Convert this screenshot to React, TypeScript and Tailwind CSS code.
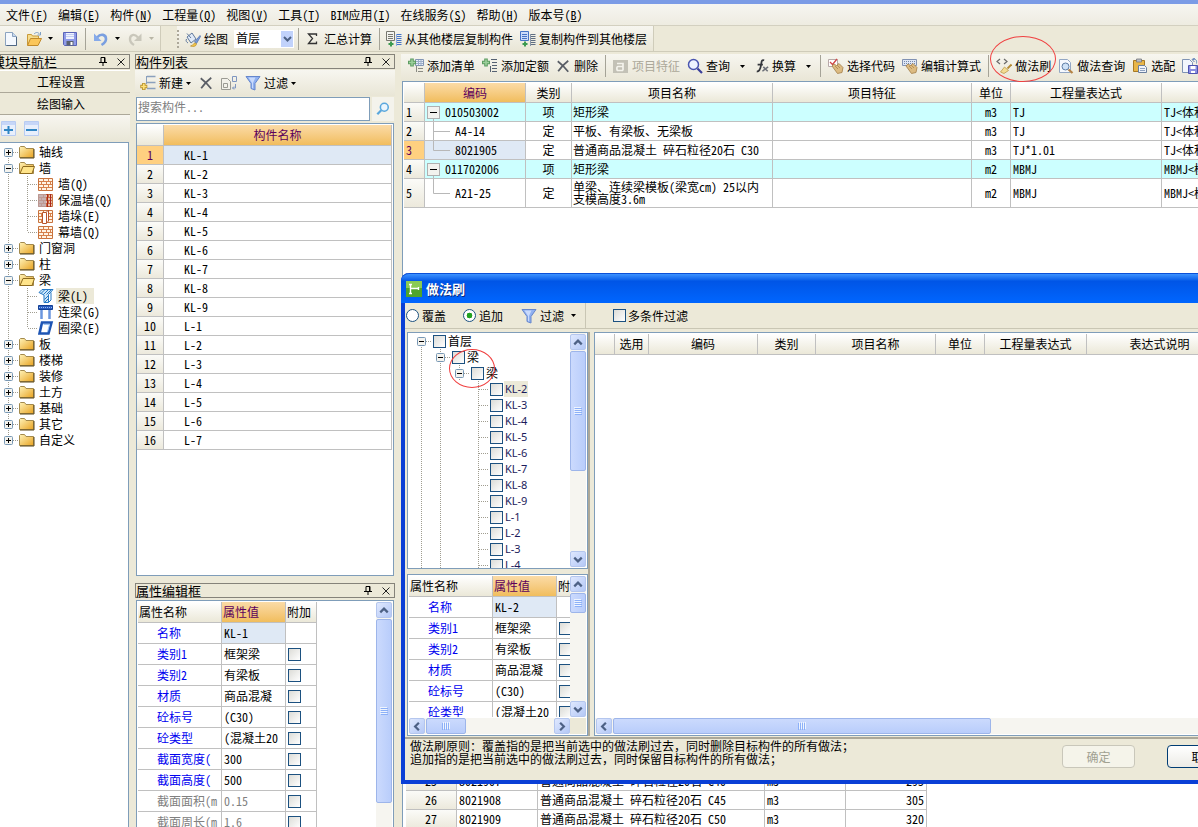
import React from 'react';

type Kids = { children?: React.ReactNode };

/* ---------- small controls ---------- */

const Caret = ({ dim }: { dim?: boolean }) => (
  <svg width="5" height="3" viewBox="0 0 5 3" className="shrink-0" aria-hidden>
    <path d="M0 0h5L2.5 3z" fill={dim ? '#b8b5a6' : '#000'} />
  </svg>
);

const Check = ({ label, id }: { label?: string; id?: string }) => (
  <input
    id={id}
    type="checkbox"
    aria-label={label}
    className="block h-[13px] w-[13px] shrink-0 appearance-none border border-[#1c5180] bg-linear-to-br from-[#dcdcd7] to-white"
  />
);

const Sep = () => <span className="h-[22px] w-px shrink-0 bg-[#a5a397]" />;

const Tool = ({ icon, children, caret, disabled, gap = 'gap-[3px]' }: Kids & { icon: React.ReactNode; caret?: boolean; disabled?: boolean; gap?: string }) => (
  <button type="button" disabled={disabled} className={`flex shrink-0 items-center ${gap} whitespace-nowrap ${disabled ? 'text-[#aca899]' : ''}`}>
    {icon}
    <span>{children}</span>
    {caret && <Caret />}
  </button>
);

const arrows = {
  up: 'M3.5 9.5 7.5 5.5 11.5 9.5',
  down: 'M3.5 5.5 7.5 9.5 11.5 5.5',
  left: 'M9.5 3.5 5.5 7.5 9.5 11.5',
  right: 'M5.5 3.5 9.5 7.5 5.5 11.5',
};

const ScrollButton = ({ dir, label }: { dir: keyof typeof arrows; label: string }) => (
  <button type="button" aria-label={label} className="flex h-4 w-4 shrink-0 items-center justify-center rounded-xs border border-[#b4c6ee] bg-linear-to-br from-[#dfe8fe] to-[#b4c8f6]">
    <svg width="15" height="15" viewBox="0 0 15 15" fill="none" stroke="#4d6185" strokeWidth="2.4" aria-hidden>
      <path d={arrows[dir]} />
    </svg>
  </button>
);

const Grip = ({ vertical }: { vertical?: boolean }) => (
  <svg width="8" height="8" viewBox="0 0 8 8" className={vertical ? '' : 'rotate-90'} aria-hidden>
    <path d="M0 .5h7M0 2.5h7M0 4.5h7M0 6.5h7" stroke="#eef4fe" />
    <path d="M1 1.5h7M1 3.5h7M1 5.5h7M1 7.5h7" stroke="#8cb0f8" />
  </svg>
);

const VThumb = ({ size }: { size: string }) => (
  <div className={`flex w-4 shrink-0 items-center justify-center rounded-xs border border-[#9db5ea] bg-linear-to-r from-[#cbdafd] to-[#b9cdfb] ${size}`}>
    <Grip vertical />
  </div>
);

const HThumb = ({ size }: { size: string }) => (
  <div className={`flex h-4 shrink-0 items-center justify-center rounded-xs border border-[#9db5ea] bg-linear-to-b from-[#cbdafd] to-[#b9cdfb] ${size}`}>
    <Grip />
  </div>
);

/* ---------- icons ---------- */

const Svg = ({ children, size = 16, vb = '0 0 16 16' }: Kids & { size?: number; vb?: string }) => (
  <svg width={size} height={size} viewBox={vb} className="shrink-0" fill="none" aria-hidden>
    {children}
  </svg>
);

const NewIcon = () => (
  <Svg>
    <path d="M2.5 1.5h7l4 4v9h-11z" fill="#f4f8fe" stroke="#8ba3c0" />
    <path d="M9.5 1.5v4h4" fill="#c9d8ec" stroke="#8ba3c0" />
    <path d="M13.5 6v8.5h-10" stroke="#4f6784" />
  </Svg>
);
const OpenIcon = () => (
  <Svg>
    <path d="M1.5 14V3.5h4l1 1.500h6v3" fill="#f6dc8c" stroke="#c99a3a" />
    <path d="M1.500 14.500 4.500 7.500h11l-3.500 7z" fill="#fbc65a" stroke="#c18a2b" />
    <path d="M8 3c2-2 4-2 5.500 0M14.500 1v3h-3" stroke="#7fa0c4" />
  </Svg>
);
const SaveIcon = () => (
  <Svg>
    <path d="M1.5 1.500h13v13h-12l-1-1z" fill="#8f9be8" stroke="#5a64b8" />
    <path d="M4 2h8v6H4z" fill="#eef2fd" />
    <path d="M4 3.500h8M4 5.500h8" stroke="#c3cdf3" />
    <path d="M4.500 10h7v4.500h-7z" fill="#5b6270" />
    <path d="M8.500 11h2v3h-2z" fill="#fff" />
  </Svg>
);
const UndoIcon = () => (
  <Svg>
    <path d="M4 6.500C8 2 13 3.500 13 8c0 3-2 4.500-4.500 6" stroke="#7a9fe0" strokeWidth="2.6" />
    <path d="M1 2.500v7.500h7.500z" fill="#86aaea" />
  </Svg>
);
const RedoIcon = () => (
  <Svg>
    <path d="M11 6.500C7 2 3 4 3 8c0 3 1.500 4.500 4 6" stroke="#c9c7bb" strokeWidth="2.400" />
    <path d="M14.500 2.500V10H7z" fill="#c9c7bb" />
  </Svg>
);
const PaintIcon = () => (
  <Svg>
    <path d="M2 6 7 2l4 6-5 4z" fill="#dfe9f7" stroke="#60799d" />
    <path d="M2 2.500 6 7M1.500 8c-1 2 0 3 1.500 4" stroke="#60799d" />
    <path d="M15 4.500 9.500 11l2 1.500 4-7z" fill="#7c9edb" stroke="#4869a9" strokeWidth=".7" />
    <path d="M5.500 15c2.500 0 3-3.500 5-3l1 1c-.5 2.500-3 3-6 2z" fill="#f1c64a" stroke="#b78b28" strokeWidth=".7" />
  </Svg>
);
const CopyFloorIcon = ({ to }: { to?: boolean }) => (
  <Svg>
    <path d="M.5.5h8v9h-8z" fill={to ? '#cddcf9' : '#f3f3ef'} stroke={to ? '#4674c6' : '#77776f'} />
    <path d="M2 3.500h5M2 5.500h5M2 7.500h5" stroke={to ? '#4674c6' : '#77776f'} />
    <path d="M11 3.500h4.500M11 5.500h4.500M11 7.500h4.500M11 9.500h4.500M11 11.500h4.500M11 13.500h4.500" stroke={to ? '#5f6e82' : '#4674c6'} />
    <path d="M10.500 3v12" stroke={to ? '#8a97a8' : '#8cabe4'} />
    <path d="M5 10.500v5M2.500 13h5" stroke="#3c9a50" strokeWidth="2" />
  </Svg>
);
const AddRowIcon = ({ fine }: { fine?: boolean }) => (
  <Svg>
    {!fine && <path d="M7.500 1.500h8v6h-8z" fill="#e9eff9" stroke="#8396b5" />}
    {!fine && <path d="M8 3.500h7M8 5.500h7M10.500 2v5M13 2v5" stroke="#9badc9" />}
    {fine && <path d="M9 1.500h6M10 4.500h5M10 7.500h5" stroke="#566273" />}
    <path d="M10 10.500h5M10 13.500h5M8.500 8v6" stroke={fine ? '#566273' : '#8a8a82'} />
    <path d="M4 .5v8M0 4.500h8" stroke="#5d9c62" strokeWidth="3.600" />
    <path d="M4 1.500v6M1 4.500h6" stroke="#9ccf9c" strokeWidth="1.600" />
  </Svg>
);
const CrossIcon = () => (
  <Svg size={14}>
    <path d="M2 2.500c4 3 8 7 12 12M14 2C10 5 6 9 2.500 14" stroke="#5a5e66" strokeWidth="2" />
  </Svg>
);
const FeatureIcon = () => (
  <Svg>
    <path d="M0 2h15v13H0z" fill="#c3c1b6" />
    <path d="M4 5.500h6v7M10 8.500H5c-1.500 0-1.500 4 0 4h5" stroke="#f4f3ec" strokeWidth="1.700" />
  </Svg>
);
const FindIcon = () => (
  <Svg>
    <circle cx="6.500" cy="6.500" r="5" fill="#eef3ff" stroke="#4a55b0" strokeWidth="1.500" />
    <path d="m10.500 10.500 4.500 4.500" stroke="#3a3f9a" strokeWidth="2.200" />
  </Svg>
);
const FxIcon = () => (
  <Svg size={14}>
    <path d="M10.500 1.500c-3-1-3 1.500-3.500 5s-1 8-5 8M3 6.500h6" stroke="#35373c" strokeWidth="2" />
    <path d="m9.500 9 5 5M15 9l-6.500 5" stroke="#6d7078" strokeWidth="1.800" />
  </Svg>
);
const HandIcon = ({ keys }: { keys?: boolean }) => (
  <Svg>
    {keys ? <path d="M.5 1.500h14v6H.5z" fill="#dfe7f5" stroke="#8192b3" /> : <path d="M.5 1.500h9v7h-9z" fill="#fff" stroke="#b7a9a9" />}
    {keys ? <path d="M2 3.500h11M2 5.500h11" stroke="#7387ab" strokeDasharray="1 1" /> : <path d="m2 4 2.500 2.500L9 1" stroke="#d04545" strokeWidth="1.300" />}
    <path d="m4 8 2-2 2.500 1.500L11 5.500l4 4-1 5-4.500 1z" fill="#dcbb82" stroke="#a37e48" strokeWidth=".8" />
    <path d="m7 8 3 3M9 7l3 3" stroke="#a37e48" strokeWidth=".7" />
  </Svg>
);
const BrushIcon = () => (
  <Svg>
    <path d="M4 1 1 3.500 4 6M8 1l3 2.500L8 6" stroke="#6a6a6a" strokeWidth="1.200" />
    <path d="m15.500 6.500-4 4" stroke="#b38a35" strokeWidth="1.800" />
    <path d="m8.500 9 4 3.500-4.500 3-3.500-1.500z" fill="#f3dc92" stroke="#bd9a4c" strokeWidth=".8" />
  </Svg>
);
const PageFindIcon = () => (
  <Svg>
    <path d="M1.500 1.500h8l3 3v10h-11z" fill="#f6f9fe" stroke="#93a7c4" />
    <circle cx="7.500" cy="8.500" r="3.500" fill="#cfe2f7" stroke="#5f7ea6" />
    <path d="m10.500 11.500 4 3.500" stroke="#b58243" strokeWidth="2.200" />
  </Svg>
);
const PasteIcon = () => (
  <Svg>
    <path d="M1.500 2.500h11v11h-11z" fill="#e8b648" stroke="#a87a24" />
    <path d="M4.500 1h5v3h-5z" fill="#b9bcc4" stroke="#73767e" strokeWidth=".8" />
    <path d="M6.500 7.500h6l2 2v5h-8z" fill="#f0f4fb" stroke="#6a7f9e" />
    <path d="M8 10.500h5M8 12.500h5" stroke="#8fa2bf" />
  </Svg>
);
const DocSaveIcon = () => (
  <Svg>
    <path d="M.5 1.500h7l3 3v10H.5z" fill="#f2f6fd" stroke="#7f93b4" />
    <path d="M6.500 7.500h9v8h-9z" fill="#8b8fe0" stroke="#4e52b0" />
    <path d="M8.500 8h5v3h-5zM9 13h4v2H9z" fill="#fff" />
    <path d="M11 1.500c3-1 4 1 3.500 4M13 0l-3 1.500L12.500 4" stroke="#5f80b8" />
  </Svg>
);
const AddItemIcon = () => (
  <Svg>
    <path d="M7 1.500h8.500M7 7.500h8.500M7 13.500h8.500" stroke="#8aa0bd" strokeWidth="1.600" />
    <path d="M6.500 1v8" stroke="#8aa0bd" />
    <path d="M3.800 8v7M.3 11.500h7" stroke="#b7912b" strokeWidth="3.400" />
    <path d="M3.800 8.800v5.400M1.100 11.500h5.400" stroke="#ffe27a" strokeWidth="1.600" />
  </Svg>
);
const PageCopyIcon = () => (
  <Svg>
    <path d="M.5 3.500h6l3 3v8h-9z" fill="#f2f1ea" stroke="#9a9a93" />
    <path d="M2.500 8.500h4v4h-4z" stroke="#9a9a93" />
    <path d="M11.500 1.500h4v5h-4z" stroke="#7f96c0" />
    <path d="M14.500 9v4h-3m0 0 1.500-1.500m-1.500 1.500 1.500 1.500" stroke="#7f96c0" />
  </Svg>
);
const FunnelIcon = () => (
  <Svg>
    <path d="M1 1.500h14L10 8.500V15l-4-1.500v-5z" fill="#8fb0f0" stroke="#6586cc" />
    <path d="M3.500 2.500h7L8 8v5.500l-1-.5V8z" fill="#c9dafc" />
  </Svg>
);
const SearchIcon = () => (
  <Svg size={14}>
    <circle cx="9.500" cy="6" r="4.500" fill="#eaf5fd" stroke="#5aa7dd" strokeWidth="1.800" />
    <path d="M6 9.500 1.500 14" stroke="#5aa7dd" strokeWidth="2.600" />
  </Svg>
);
const FolderIcon = ({ open }: { open?: boolean }) => (
  <Svg>
    <defs>
      <linearGradient id="folderFill" x1="0" y1="0" x2="1" y2="1">
        <stop offset="0" stopColor="#fff3b8" />
        <stop offset="1" stopColor="#e8a322" />
      </linearGradient>
    </defs>
    <path d="M.5 13.500v-10l1-1h4l1.500 2h7.500v9z" fill="url(#folderFill)" stroke="#a38a4d" />
    {open ? <path d="M1 13.500 4 6.500h11.500L13 13.500z" fill="#ffe48a" stroke="#8d6a1e" /> : <path d="M15 5v9H1" stroke="#5b4616" />}
  </Svg>
);
const BrickIcon = ({ kind }: { kind: string }) => (
  <Svg>
    <path d="M.5 2.500h14v12H.5z" fill="#fff3e2" stroke="#c8733e" />
    <path d="M1 5.500h13M1 8.500h13M1 11.500h13M5.500 3v2.500M10.500 3v2.500M3.500 6v2.500M8.500 6v2.500M12.500 6v2.500M5.500 9v2.500M10.500 9v2.500M3.500 12v2.500M8.500 12v2.500" stroke="#d6804a" />
    {kind === 'insulated' && <path d="M0 2h8v13H0z" fill="#b9a1a6" opacity=".8" />}
    {kind === 'insulated' && <path d="M9.500 2v13M12.500 2v13" stroke="#a8281c" strokeWidth="1.500" />}
    {kind === 'pier' && <path d="M4.500 4.500h4v11h-4zM8.500 4l2-2v11l-2 2" fill="#fff" stroke="#b8552a" />}
  </Svg>
);
const BeamIcon = () => (
  <Svg>
    <path d="M1 4.500 4 1.500h11l-3 3.500-1.500 1.500v8H6V7z" fill="#cde8fa" stroke="#2678c4" />
    <path d="m3 5.500 3.500-3.500M5.500 6.500 10 2M8.500 6.500 13 2M6.500 11.500l3.500-3.500M6.500 14.500l3.500-3.500" stroke="#2678c4" />
    <path d="M10.500 14.500 13 12V4.500" stroke="#2678c4" />
  </Svg>
);
const LinkBeamIcon = () => (
  <Svg>
    <path d="M.5 1.500h14v4H.5z" fill="#2a5cc0" stroke="#123f94" />
    <path d="M1 3.500h13" stroke="#9cc0f2" strokeDasharray="1 1" />
    <path d="M3.500 6v9M11.500 6v9" stroke="#6b96de" strokeWidth="2.500" />
  </Svg>
);
const RingBeamIcon = () => (
  <Svg>
    <path d="M4 2.500h9.500l-3 11H1.500z" fill="#fff" stroke="#1e55b4" strokeWidth="2.600" />
    <path d="M5.500 4.500h6l-2 7.500" stroke="#9cc4f4" />
  </Svg>
);
const PinIcon = () => (
  <svg width="8" height="9" viewBox="0 0 8 9" fill="none" aria-hidden>
    <path d="M2 .5h4v5H2zM5.500 1v4.500M0 5.500h8M4 6v3" stroke="#000" />
  </svg>
);
const CloseIcon = () => (
  <svg width="8" height="8" viewBox="0 0 8 8" fill="none" aria-hidden>
    <path d="m.5.5 7 7M7.500.5l-7 7" stroke="#222" />
  </svg>
);

/* ---------- tree ---------- */

type GuideKind = 'plus' | 'minus' | 'branch' | 'end' | 'line' | 'blank';

const Guide = ({ kind, first, last }: { kind: GuideKind; first?: boolean; last?: boolean }) => {
  const node = kind === 'plus' || kind === 'minus';
  const top = first ? 8 : 0;
  const bottom = last || kind === 'end' ? 8 : 16;
  return (
    <svg width="19" height="16" viewBox="0 0 19 16" className="shrink-0" fill="none" aria-hidden>
      {kind !== 'blank' && <path d={`M8.500 ${top}V${bottom}`} stroke="#a09d90" strokeDasharray="1 1" />}
      {kind !== 'blank' && kind !== 'line' && <path d="M9 8.500H19" stroke="#a09d90" strokeDasharray="1 1" />}
      {node && <rect x="4.500" y="4.500" width="8" height="8" rx="1" fill="#f4f3ee" stroke="#7898b5" />}
      {node && <path d={kind === 'plus' ? 'M6 8.500h5M8.500 6v5' : 'M6 8.500h5'} stroke="#000" />}
    </svg>
  );
};

type NavChild = { text: string; icon: React.ReactNode; selected?: boolean };
const nav: { text: string; children?: NavChild[] }[] = [
  { text: '轴线' },
  {
    text: '墙',
    children: [
      { text: '墙(Q)', icon: <BrickIcon kind="plain" /> },
      { text: '保温墙(Q)', icon: <BrickIcon kind="insulated" /> },
      { text: '墙垛(E)', icon: <BrickIcon kind="pier" /> },
      { text: '幕墙(Q)', icon: <BrickIcon kind="plain" /> },
    ],
  },
  { text: '门窗洞' },
  { text: '柱' },
  {
    text: '梁',
    children: [
      { text: '梁(L)', icon: <BeamIcon />, selected: true },
      { text: '连梁(G)', icon: <LinkBeamIcon /> },
      { text: '圈梁(E)', icon: <RingBeamIcon /> },
    ],
  },
  { text: '板' },
  { text: '楼梯' },
  { text: '装修' },
  { text: '土方' },
  { text: '基础' },
  { text: '其它' },
  { text: '自定义' },
];

const NavTree = () => (
  <ul className="pt-px">
    {nav.map((n, i) => (
      <li key={n.text}>
        <div className="flex h-4 items-center">
          <Guide kind={n.children ? 'minus' : 'plus'} first={i === 0} last={i === nav.length - 1} />
          <FolderIcon open={!!n.children} />
          <span className="ml-1">{n.text}</span>
        </div>
        {n.children && (
          <ul>
            {n.children.map((c, j) => (
              <li key={c.text} className="flex h-4 items-center">
                <Guide kind="line" />
                <Guide kind={j === n.children!.length - 1 ? 'end' : 'branch'} />
                {c.icon}
                <span className={`ml-0.5 pr-1.5 pl-0.5 ${c.selected ? 'bg-[#ece9d8]' : ''}`}>{c.text}</span>
              </li>
            ))}
          </ul>
        )}
      </li>
    ))}
  </ul>
);

const TargetRow = ({ guides, text, first, latin, selected }: { guides: GuideKind[]; text: string; first?: boolean; latin?: boolean; selected?: boolean }) => (
  <li className="flex h-4 items-center">
    {guides.map((g, i) => (
      <Guide key={i} kind={g} first={first} />
    ))}
    <label className="ml-px flex h-4 items-center">
      <Check />
      <span className={`ml-px px-px ${latin ? "font-['Noto_Sans','Noto_Sans_CJK_SC',sans-serif] text-[11px] text-[#1c1c5c]" : ''} ${selected ? 'bg-[#ece9d8]' : ''}`}>{text}</span>
    </label>
  </li>
);

const targets = ['KL-2', 'KL-3', 'KL-4', 'KL-5', 'KL-6', 'KL-7', 'KL-8', 'KL-9', 'L-1', 'L-2', 'L-3', 'L-4'];

/* ---------- tables ---------- */

const headGrad = 'bg-linear-to-b from-white to-[#ebe8d8]';
const headOn = 'bg-linear-to-b from-[#fbdba6] to-[#f1bd5c] text-[#5c005c]';
const sideGrad = 'bg-linear-to-b from-[#fbfbf8] to-[#ece9dc]';
const line = 'border-r border-b border-[#c0c0c0]';

const props = [
  ['名称', 'KL-1'],
  ['类别1', '框架梁'],
  ['类别2', '有梁板'],
  ['材质', '商品混凝'],
  ['砼标号', '(C30)'],
  ['砼类型', '(混凝土20'],
  ['截面宽度(', '300'],
  ['截面高度(', '500'],
  ['截面面积(m', '0.15'],
  ['截面周长(m', '1.6'],
];

const PropTable = ({ name, count }: { name: string; count: number }) => (
  <table className="w-[179px] table-fixed border-separate border-spacing-0">
    <colgroup>
      <col className="w-[84px]" />
      <col className="w-16" />
      <col className="w-[31px]" />
    </colgroup>
    <thead>
      <tr className="h-[21px] text-left">
        <th className={`px-px font-normal ${line} ${headGrad}`}>属性名称</th>
        <th className={`px-px font-normal ${line} ${headOn}`}>属性值</th>
        <th className={`px-px font-normal whitespace-nowrap ${line} ${headGrad}`}>附加</th>
      </tr>
    </thead>
    <tbody>
      {props.slice(0, count).map(([k, v], i) => (
        <tr key={k} className={`h-[21px] ${i > 7 ? 'text-[#808080]' : ''}`}>
          <td className={`overflow-hidden pl-[19px] whitespace-nowrap ${line} ${i > 7 ? '' : 'text-[#0000f0]'}`}>{k}</td>
          <td className={`overflow-hidden pl-0.5 whitespace-nowrap ${line} ${i === 0 ? 'bg-[#dfe9f5]' : ''}`}>{i === 0 ? name : v}</td>
          <td className={`pl-0.5 ${line}`}>{i > 0 && <Check label={`附加 ${k}`} />}</td>
        </tr>
      ))}
    </tbody>
  </table>
);

const components = ['KL-1', 'KL-2', 'KL-3', 'KL-4', 'KL-5', 'KL-6', 'KL-7', 'KL-8', 'KL-9', 'L-1', 'L-2', 'L-3', 'L-4', 'L-5', 'L-6', 'L-7'];

const ComponentTable = () => (
  <table className="w-full table-fixed border-separate border-spacing-0">
    <colgroup>
      <col className="w-[27px]" />
      <col />
    </colgroup>
    <thead>
      <tr className="h-[21px]">
        <th aria-label="序号" className={`${line} ${headGrad}`} />
        <th className={`font-normal ${line} ${headOn}`}>构件名称</th>
      </tr>
    </thead>
    <tbody>
      {components.map((c, i) => (
        <tr key={c} className="h-[19px]">
          <td className={`text-center ${line} ${i === 0 ? 'bg-[#ffd080] text-[#5c005c]' : sideGrad}`}>{i + 1}</td>
          <td className={`pl-5 ${line} ${i === 0 ? 'bg-[#dfe9f5]' : ''}`}>{c}</td>
        </tr>
      ))}
    </tbody>
  </table>
);

type Bill = { code: string; kind: string; name: string; unit: string; expr: string; note: string; parent?: boolean; lastChild?: boolean };
const bills: Bill[] = [
  { code: '010503002', kind: '项', name: '矩形梁', unit: 'm3', expr: 'TJ', note: 'TJ<体积>', parent: true },
  { code: 'A4-14', kind: '定', name: '平板、有梁板、无梁板', unit: 'm3', expr: 'TJ', note: 'TJ<体积>' },
  { code: '8021905', kind: '定', name: '普通商品混凝土 碎石粒径20石 C30', unit: 'm3', expr: 'TJ*1.01', note: 'TJ<体积>*1.01', lastChild: true },
  { code: '011702006', kind: '项', name: '矩形梁', unit: 'm2', expr: 'MBMJ', note: 'MBMJ<模板面积>', parent: true },
  { code: 'A21-25', kind: '定', name: '单梁、连续梁模板(梁宽cm) 25以内 支模高度3.6m', unit: 'm2', expr: 'MBMJ', note: 'MBMJ<模板面积>', lastChild: true },
];

const CodeCell = ({ row, tall }: { row: Bill; tall: boolean }) => {
  const h = tall ? 28 : 18;
  const mid = h / 2;
  return (
    <div className="flex items-center">
      <svg width={row.parent ? 20 : 30} height={h} viewBox={`0 0 ${row.parent ? 20 : 30} ${h}`} fill="none" className="shrink-0" aria-hidden>
        {row.parent ? (
          <>
            <path d="M8.500 14v4" stroke="#b8b8b8" />
            <rect x="2.500" y="3.500" width="12" height="12" fill="#f2f2ee" stroke="#b0b0b0" />
            <path d="M5 9.500h7" stroke="#000" />
          </>
        ) : (
          <path d={`M8.500 0V${row.lastChild ? mid + 0.5 : h}M8.500 ${mid + 0.5}H25`} stroke="#b8b8b8" />
        )}
      </svg>
      {row.code}
    </div>
  );
};

const BillTable = () => (
  <table className="w-full table-fixed border-separate border-spacing-0">
    <colgroup>
      <col className="w-[21px]" />
      <col className="w-[101px]" />
      <col className="w-[46px]" />
      <col className="w-[201px]" />
      <col className="w-[199px]" />
      <col className="w-[39px]" />
      <col className="w-[151px]" />
      <col />
    </colgroup>
    <thead>
      <tr className="h-5">
        {['', '编码', '类别', '项目名称', '项目特征', '单位', '工程量表达式', ''].map((h, i) => (
          <th key={i} className={`font-normal ${i === 7 ? 'border-b border-[#c0c0c0]' : line} ${i === 1 ? headOn : headGrad}`}>{h}</th>
        ))}
      </tr>
    </thead>
    <tbody>
      {bills.map((b, i) => (
        <tr key={b.code} className={`${i === 4 ? 'h-[29px]' : 'h-[19px]'} ${b.parent ? 'bg-[#ccffff]' : ''}`}>
          <td className={`pl-0.5 ${line} ${i === 2 ? 'bg-[#ffd080] text-[#5c005c]' : sideGrad}`}>{i + 1}</td>
          <td className={`${line} ${i === 2 ? 'bg-[#dfe9f5]' : ''}`}><CodeCell row={b} tall={i === 4} /></td>
          <td className={`text-center ${line}`}>{b.kind}</td>
          <td className={`px-px ${line} ${i === 4 ? 'leading-3' : ''}`}>{b.name}</td>
          <td className={line} />
          <td className={`text-center ${line}`}>{b.unit}</td>
          <td className={`pl-0.5 ${line}`}>{b.expr}</td>
          <td className="overflow-hidden border-b border-[#c0c0c0] pl-0.5 whitespace-nowrap">{b.note}</td>
        </tr>
      ))}
    </tbody>
  </table>
);

const quotas = [
  [25, '8021907', '普通商品混凝土 碎石粒径20石 C40', 'm3', 295],
  [26, '8021908', '普通商品混凝土 碎石粒径20石 C45', 'm3', 305],
  [27, '8021909', '普通商品混凝土 碎石粒径20石 C50', 'm3', 320],
];

const QuotaTable = () => (
  <table className="w-[521px] table-fixed border-separate border-spacing-0">
    <colgroup>
      <col className="w-[51px]" />
      <col className="w-[81px]" />
      <col className="w-[227px]" />
      <col className="w-[81px]" />
      <col className="w-[81px]" />
    </colgroup>
    <tbody>
      {quotas.map((r) => (
        <tr key={r[0]} className="h-[19px]">
          <td className={`text-center ${line} ${sideGrad}`}>{r[0]}</td>
          <td className={`pl-0.5 ${line}`}>{r[1]}</td>
          <td className={`pl-0.5 whitespace-nowrap ${line}`}>{r[2]}</td>
          <td className={`pl-0.5 ${line}`}>{r[3]}</td>
          <td className={`pr-0.5 text-right ${line}`}>{r[4]}</td>
        </tr>
      ))}
    </tbody>
  </table>
);

/* ---------- panels ---------- */

const PanelHeader = ({ title, clipped }: { title: string; clipped?: boolean }) => (
  <div className="flex h-[15px] shrink-0 items-center border border-[#85837a] bg-[#ece9d8] pr-1 text-[13px] leading-[13px]">
    <h2 className={`flex-1 whitespace-nowrap ${clipped ? '-indent-[9px]' : ''}`}>{title}</h2>
    <button type="button" aria-label="固定" className="mr-2.5"><PinIcon /></button>
    <button type="button" aria-label="关闭"><CloseIcon /></button>
  </div>
);

const barGrad = 'bg-linear-to-b from-[#f7f6f0] to-[#e9e6d6]';

const NavPanel = () => (
  <aside className="flex w-[130px] shrink-0 flex-col pt-0.5">
    <PanelHeader title="模块导航栏" clipped />
    <button type="button" className="mt-px h-[23px] border-t border-b border-t-white border-b-[#aca899] pr-2">工程设置</button>
    <button type="button" className="h-[22px] border-b border-[#aca899] pr-2">绘图输入</button>
    <div className={`flex h-[27px] shrink-0 items-center gap-2 pl-px ${barGrad}`}>
      <button type="button" aria-label="全部展开">
        <Svg size={15} vb="0 0 15 15"><path d="M.5.5h14v14H.5z" fill="#e8effc" stroke="#b8ccf2" /><path d="M1 1h13v3H1z" fill="#c6d6f8" /><path d="M3 9h9M7.500 5v8" stroke="#2f86c4" strokeWidth="2" /></Svg>
      </button>
      <button type="button" aria-label="全部折叠">
        <Svg size={15} vb="0 0 15 15"><path d="M.5.5h14v14H.5z" fill="#e8effc" stroke="#b8ccf2" /><path d="M1 1h13v3H1z" fill="#c6d6f8" /><path d="M2 9h11" stroke="#2f86c4" strokeWidth="2" /></Svg>
      </button>
    </div>
    <div className="mr-px flex-1 overflow-hidden border-t border-r border-[#7f9db9] bg-white">
      <NavTree />
    </div>
  </aside>
);

const ListPanel = () => (
  <section className="ml-[5px] flex w-[260px] shrink-0 flex-col pt-0.5">
    <PanelHeader title="构件列表" />
    <div className={`mt-px flex h-[26px] shrink-0 items-center gap-2 pl-[5px] ${barGrad}`}>
      <Tool icon={<AddItemIcon />} caret>新建</Tool>
      <button type="button" aria-label="删除"><CrossIcon /></button>
      <button type="button" aria-label="复制"><PageCopyIcon /></button>
      <Tool icon={<FunnelIcon />} caret>过滤</Tool>
    </div>
    <div className="mt-px flex h-6 shrink-0 gap-0.5 px-px">
      <input type="text" aria-label="搜索构件" placeholder="搜索构件..." className="min-w-0 flex-1 border border-[#7f9db9] bg-white px-px pb-1 placeholder:text-[#808080]" />
      <button type="button" aria-label="搜索" className="flex w-[22px] items-center justify-center bg-[#f4f3ec]"><SearchIcon /></button>
    </div>
    <div className="mx-px mt-0.5 min-h-0 flex-1 overflow-hidden border border-[#7f9db9] bg-white pt-px pr-px">
      <ComponentTable />
    </div>
    <div className="mt-[7px] flex h-[244px] shrink-0 flex-col">
      <PanelHeader title="属性编辑框" />
      <div className="mx-px mt-0.5 flex min-h-0 flex-1 overflow-hidden border border-b-0 border-[#7f9db9] bg-white pt-px pl-px">
        <div className="min-w-0 flex-1 overflow-hidden"><PropTable name="KL-1" count={10} /></div>
        <div className="mr-px flex w-4 flex-col gap-px bg-[#f6f5f0]">
          <ScrollButton dir="up" label="向上滚动" />
          <VThumb size="h-[184px]" />
        </div>
      </div>
    </div>
  </section>
);

const gridCols = ['', '选用', '编码', '类别', '项目名称', '单位', '工程量表达式', '表达式说明'];

const BrushDialog = () => (
  <section role="dialog" aria-label="做法刷" className="absolute top-[221px] -right-14 left-0 flex flex-col rounded-t-lg border-x-4 border-b-4 border-[#0a3fd6] bg-[#ece9d8]">
    <header className="-mx-1 flex h-[30px] items-center gap-1 rounded-t-lg border-t border-[#0a50d8] bg-linear-to-b from-[#3c92ff] via-[#0055e6] via-25% to-[#0066ff] pl-[5px]">
      <Svg>
        <path d="M0 0h16v16H0z" fill="#4fa52a" />
        <path d="M0 0h16v7H0z" fill="#8acb55" />
        <path d="M4.500 3v10M3 3.500h3M3 12.500h3M5 7.500h8M12.500 6v3" stroke="#fff" strokeWidth="1.400" />
      </Svg>
      <h2 className="text-[13px] font-bold text-white [text-shadow:1px_1px_#0a2a80]">做法刷</h2>
    </header>
    <div className="flex h-[26px] items-center border-b border-[#c9c6b4]">
      <div className="flex h-full w-[181px] items-center border-r border-[#c9c6b4] pl-px">
        {['覆盖', '追加'].map((t, i) => (
          <label key={t} className="mr-[17px] flex items-center gap-[3px]">
            <input type="radio" name="mode" defaultChecked={i === 1} className="h-[13px] w-[13px] appearance-none rounded-full border border-[#1c5180] bg-white checked:bg-radial checked:from-[#21a121] checked:from-35% checked:to-white checked:to-40%" />
            {t}
          </label>
        ))}
        <button type="button" className="flex items-center gap-[3px] pl-px">
          <FunnelIcon />
          过滤
          <span className="pl-1"><Caret /></span>
        </button>
      </div>
      <label className="ml-[27px] flex items-center gap-0.5">
        <Check />
        多条件过滤
      </label>
    </div>
    <div className="mt-[3px] flex h-[404px] pl-0.5">
      <div className="flex w-[181px] shrink-0 flex-col gap-[5px]">
        <div className="flex h-[237px] shrink-0 overflow-hidden border border-[#7f9db9] bg-white pr-px pb-px">
          <ul className="relative min-w-0 flex-1 pl-[5px]">
            <TargetRow guides={['minus']} first text="首层" />
            <TargetRow guides={['line', 'minus']} text="梁" />
            <TargetRow guides={['line', 'line', 'minus']} text="梁" />
            {targets.map((t, i) => (
              <TargetRow key={t} guides={['line', 'line', 'blank', 'branch']} text={t} latin selected={i === 0} />
            ))}
            <li aria-hidden className="pointer-events-none absolute top-4 left-[41px] h-[39px] w-[46px] rounded-[50%] border border-[#f04040]" />
          </ul>
          <div className="flex w-4 flex-col gap-px bg-[#f6f5f0] pt-px">
            <ScrollButton dir="up" label="向上滚动" />
            <VThumb size="h-[120px]" />
            <span className="flex-1" />
            <ScrollButton dir="down" label="向下滚动" />
          </div>
        </div>
        <div className="flex min-h-0 flex-1 flex-col border border-[#7f9db9] bg-white p-px">
          <div className="flex min-h-0 flex-1">
            <div className="min-w-0 flex-1 overflow-hidden"><PropTable name="KL-2" count={6} /></div>
            <div className="flex w-4 flex-col gap-px bg-[#f6f5f0]">
              <ScrollButton dir="up" label="向上滚动" />
              <VThumb size="h-5" />
              <span className="flex-1" />
              <ScrollButton dir="down" label="向下滚动" />
            </div>
          </div>
          <div className="mt-px flex shrink-0 bg-[#ece9d8]">
            <div className="flex flex-1 gap-px bg-[#f6f5f0]">
              <ScrollButton dir="left" label="向左滚动" />
              <HThumb size="w-10" />
              <span className="flex-1" />
              <ScrollButton dir="right" label="向右滚动" />
            </div>
            <span className="w-4" />
          </div>
        </div>
      </div>
      <div className="mr-[3px] w-[3px] border-l-2 border-[#aca899]" />
      <div className="flex min-w-0 flex-1 flex-col border border-[#7f9db9] bg-white">
        <table className="mt-px w-full table-fixed border-separate border-spacing-0">
          <colgroup>
            <col className="w-5" />
            <col className="w-[34px]" />
            <col className="w-[109px]" />
            <col className="w-[58px]" />
            <col className="w-[120px]" />
            <col className="w-[49px]" />
            <col className="w-[102px]" />
            <col />
          </colgroup>
          <thead>
            <tr className="h-[21px]">
              {gridCols.map((h, i) => (
                <th key={i} className={`font-normal ${line} ${headGrad} ${i === 7 ? 'pr-4' : ''}`}>{h}</th>
              ))}
            </tr>
          </thead>
        </table>
        <div className="flex-1" />
        <div className="mb-px flex gap-px bg-[#f6f5f0] pl-px">
          <ScrollButton dir="left" label="向左滚动" />
          <HThumb size="w-[378px]" />
        </div>
      </div>
    </div>
    <footer className="mt-px flex h-[43px] items-start gap-8 border-t-2 border-[#aca899] pr-[10px] pl-[5px]">
      <div className="flex-1 leading-[13px]">
        <p>做法刷原则：覆盖指的是把当前选中的做法刷过去，同时删除目标构件的所有做法；</p>
        <p>追加指的是把当前选中的做法刷过去，同时保留目标构件的所有做法；</p>
      </div>
      <button type="button" disabled className="mt-1.5 h-[23px] w-[73px] shrink-0 rounded-sm border border-[#c9c7ba] bg-[#f5f4ea] text-[#a1a192]">确定</button>
      <button type="button" className="mt-1.5 h-[23px] w-[73px] shrink-0 rounded-sm border border-[#003c74] bg-linear-to-b from-white to-[#ecebe6]">取消</button>
    </footer>
  </section>
);

const WorkArea = () => (
  <main className="relative ml-1.5 flex min-w-0 flex-1 flex-col pt-0.5">
    <div className={`relative flex h-[27px] shrink-0 items-center pb-[3px] pl-[7px] ${barGrad}`}>
      <div className="flex shrink-0 items-center gap-[7px]">
        <Tool icon={<AddRowIcon />}>添加清单</Tool>
        <Tool icon={<AddRowIcon fine />}>添加定额</Tool>
        <Tool icon={<CrossIcon />} gap="gap-1">删除</Tool>
        <Sep />
        <Tool icon={<FeatureIcon />} disabled>项目特征</Tool>
        <Tool icon={<FindIcon />}>查询</Tool>
        <span className="flex px-[3px]"><Caret /></span>
        <Tool icon={<FxIcon />}>换算</Tool>
        <span className="flex px-[3px]"><Caret /></span>
      </div>
      <div className="ml-1.5 flex shrink-0 items-center gap-[7px]">
        <Sep />
        <Tool icon={<HandIcon />}>选择代码</Tool>
        <Tool icon={<HandIcon keys />}>编辑计算式</Tool>
        <Sep />
        <div className="relative">
          <Tool icon={<BrushIcon />}>做法刷</Tool>
          <span aria-hidden className="pointer-events-none absolute -top-[22px] -left-1.5 h-[46px] w-[66px] rounded-[50%] border border-[#f04040]" />
        </div>
        <Tool icon={<PageFindIcon />}>做法查询</Tool>
        <Tool icon={<PasteIcon />}>选配</Tool>
        <Tool icon={<DocSaveIcon />}>存档</Tool>
      </div>
    </div>
    <div className="ml-px min-h-0 flex-1 overflow-hidden border-t border-l border-[#7f9db9] bg-white pt-px pl-px">
      <BillTable />
    </div>
    <div className="ml-px h-[55px] shrink-0 overflow-hidden border-l border-[#7f9db9] bg-white pl-[3px]">
      <QuotaTable />
    </div>
    <BrushDialog />
  </main>
);

/* ---------- application frame ---------- */

const menus = [
  ['文件', 'F'],
  ['编辑', 'E'],
  ['构件', 'N'],
  ['工程量', 'Q'],
  ['视图', 'V'],
  ['工具', 'T'],
  ['BIM应用', 'I'],
  ['在线服务', 'S'],
  ['帮助', 'H'],
  ['版本号', 'B'],
];

const MainToolbar = () => (
  <div className="flex h-[26px] shrink-0 items-center border-b border-[#cfccba]">
    <div className={`flex h-full shrink-0 items-center gap-[7px] border-r border-[#cfccba] pr-1.5 pl-[3px] ${barGrad}`}>
      <button type="button" aria-label="新建文件"><NewIcon /></button>
      <button type="button" aria-label="打开" className="flex items-center gap-1.5"><OpenIcon /><Caret /></button>
      <button type="button" aria-label="保存" className="ml-0.5"><SaveIcon /></button>
      <Sep />
      <button type="button" aria-label="撤销" className="flex items-center gap-1.5"><UndoIcon /><Caret /></button>
      <button type="button" aria-label="重做" disabled className="flex items-center gap-1.5"><RedoIcon /><Caret dim /></button>
    </div>
    <div className={`ml-4 flex h-full shrink-0 items-center border-r border-[#cfccba] pr-1.5 ${barGrad}`}>
      <span className="mr-1.5 h-[18px] border-l-2 border-dotted border-[#aca899]" />
      <Tool icon={<PaintIcon />}>绘图</Tool>
      <div className="relative ml-1.5">
        <select aria-label="楼层" className="block h-[18px] w-[60px] appearance-none bg-white pb-0.5 pl-0.5 leading-4">
          <option>首层</option>
        </select>
        <span className="pointer-events-none absolute top-px right-px flex h-4 w-3 items-center justify-center bg-[#c1d2fb]">
          <svg width="9" height="6" viewBox="0 0 9 6" fill="none" aria-hidden><path d="m1 1 3.500 3.500L8 1" stroke="#4d6185" strokeWidth="2" /></svg>
        </span>
      </div>
      <span className="w-1" />
      <Sep />
      <span className="w-2" />
      <Tool gap="gap-1.5" icon={<svg width="11" height="12" viewBox="0 0 11 12" fill="none" aria-hidden><path d="M9.500 3V1h-8l4 4.500-4 5h8v-2" stroke="#333" strokeWidth="1.300" /></svg>}>汇总计算</Tool>
      <span className="w-[7px]" />
      <Sep />
      <span className="w-1.5" />
      <Tool icon={<CopyFloorIcon />}>从其他楼层复制构件</Tool>
      <span className="w-[7px]" />
      <Tool icon={<CopyFloorIcon to />}>复制构件到其他楼层</Tool>
    </div>
  </div>
);

export default function App() {
  return (
    <div className="flex h-screen flex-col overflow-hidden bg-[#ece9d8] font-['Noto_Sans_Mono_CJK_SC','Noto_Sans_CJK_SC',sans-serif] text-[12px] leading-4 text-black">
      <div className="h-1 shrink-0 bg-[#7b9be6]" />
      <nav className="flex h-[22px] shrink-0 items-center gap-2.5 border-b border-[#d3d0c0] bg-linear-to-b from-[#f6f5f1] to-[#eeece1] pl-1.5">
        {menus.map(([t, k]) => (
          <button key={t} type="button" className="shrink-0 whitespace-nowrap">
            {t}(<u>{k}</u>)
          </button>
        ))}
      </nav>
      <MainToolbar />
      <div className="flex min-h-0 flex-1">
        <NavPanel />
        <ListPanel />
        <WorkArea />
      </div>
    </div>
  );
}
